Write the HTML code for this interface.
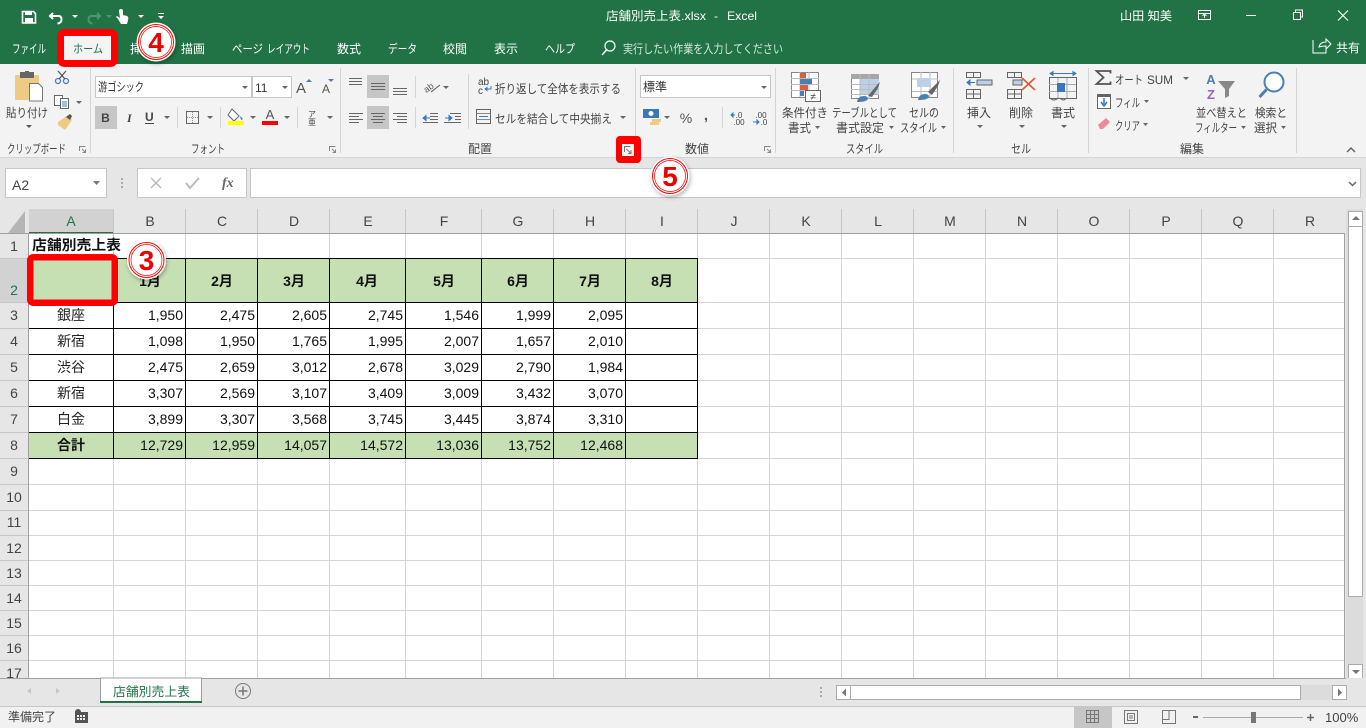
<!DOCTYPE html>
<html lang="ja"><head><meta charset="utf-8"><title>店舗別売上表.xlsx - Excel</title>
<style>
html,body{margin:0;padding:0;background:#e6e6e6;overflow:hidden}
svg{display:block;font-family:"Liberation Sans","Noto Sans CJK JP",sans-serif}
.t{font-size:12px;fill:#444}
.w{font-size:12px;fill:#fff}
.h{font-size:14px;fill:#444;text-anchor:middle}
.n{font-size:14px;fill:#111;text-anchor:end}
.c{font-size:14px;fill:#222;text-anchor:middle}
.b{font-size:14px;fill:#111;font-weight:700;text-anchor:middle}
.num{fill:#e00;font-weight:700;text-anchor:middle;font-size:28px}
</style></head><body>
<svg width="1366" height="728" viewBox="0 0 1366 728" xmlns="http://www.w3.org/2000/svg">
<defs>
<filter id="sh" x="-30%" y="-30%" width="160%" height="160%"><feDropShadow dx="1" dy="2" stdDeviation="2" flood-color="#000" flood-opacity=".3"/></filter>
</defs>
<rect width="1366" height="728" fill="#e6e6e6"/>
<!-- title -->
<rect width="1366" height="64" fill="#217346"/>
<!-- QAT -->
<g fill="none" stroke="#fff">
<path d="M22.500 11.500h11l2 2v9.500h-13z" stroke-width="1.600"/><rect x="25" y="11" width="7" height="4" fill="#fff" stroke="none"/><rect x="25" y="18" width="8" height="5" fill="#fff" stroke="none"/>
<path d="M53 13l-3 3 3 3M50.500 16h8q3 0 3 3.500t-4 4" stroke-width="2"/>
<path d="M97 13l3 3-3 3M99.500 16h-8q-3 0-3 3.500t4 4" stroke="#4f9570" stroke-width="2"/>
</g>
<path d="M119 11q0-2 2-2t2 2v4l4 1q2 1 1 4l-1 4h-6l-3-5-2-2 1-1 3 2z" fill="#fff"/>
<g fill="#fff"><path d="M72 15h6l-3 3zM138 15h6l-3 3zM158 16h6l-3 3z"/><rect x="158" y="13" width="6" height="1"/></g><path d="M106 15h6l-3 3z" fill="#4f9570"/>
<text x="606" y="20" class="w" textLength="100" lengthAdjust="spacingAndGlyphs">店舗別売上表.xlsx</text><text x="714" y="20" class="w">-</text><text x="727" y="20" class="w" textLength="30" lengthAdjust="spacingAndGlyphs">Excel</text>
<text x="1120" y="20" class="w" textLength="52" lengthAdjust="spacingAndGlyphs">山田 知美</text>
<g fill="none" stroke="#fff"><rect x="1198.500" y="10.500" width="12" height="9"/><path d="M1198 13.500h13M1204.500 18v-3M1202.500 16l2-2 2 2"/><path d="M1246 15.500h10"/><rect x="1293.500" y="12.500" width="7" height="7"/><path d="M1295.500 12v-2h7v7h-2"/><path d="M1338 10.500l10 10M1348 10.500l-10 10" stroke-width="1.100"/>
<path d="M1313 40v13h13v-4M1319 47q1-5 7-5v-3l5 5-5 5v-3q-4 0-7 1z" stroke-width="1"/></g>
<text x="1336" y="52" class="w" textLength="24" lengthAdjust="spacingAndGlyphs">共有</text>
<!-- tabs -->
<g class="w">
<text x="12" y="53" class="w" textLength="34" lengthAdjust="spacingAndGlyphs">ファイル</text>
<text x="130" y="53" class="w" textLength="24" lengthAdjust="spacingAndGlyphs">挿入</text>
<text x="181" y="53" class="w" textLength="24" lengthAdjust="spacingAndGlyphs">描画</text>
<text x="232" y="53" class="w" textLength="31" lengthAdjust="spacingAndGlyphs">ページ</text><text x="267" y="53" class="w" textLength="43" lengthAdjust="spacingAndGlyphs">レイアウト</text>
<text x="337" y="53" class="w" textLength="24" lengthAdjust="spacingAndGlyphs">数式</text>
<text x="388" y="53" class="w" textLength="29" lengthAdjust="spacingAndGlyphs">データ</text>
<text x="443" y="53" class="w" textLength="24" lengthAdjust="spacingAndGlyphs">校閲</text>
<text x="494" y="53" class="w" textLength="24" lengthAdjust="spacingAndGlyphs">表示</text>
<text x="545" y="53" class="w" textLength="30" lengthAdjust="spacingAndGlyphs">ヘルプ</text>
<text x="623" y="53" class="w" textLength="160" lengthAdjust="spacingAndGlyphs" style="fill:#d6e6dc">実行したい作業を入力してください</text>
</g>
<circle cx="610" cy="46" r="5" fill="none" stroke="#fff" stroke-width="1.200"/><path d="M606.500 50l-4.500 5" stroke="#fff" stroke-width="1.500"/>
<!-- ribbon -->
<rect y="64" width="1366" height="93" fill="#f3f3f3"/>
<rect y="157" width="1366" height="1" fill="#d4d4d4"/>
<g fill="#d4d4d4"><rect x="90" y="68" width="1" height="85"/><rect x="340" y="68" width="1" height="85"/><rect x="635" y="68" width="1" height="85"/><rect x="775" y="68" width="1" height="85"/><rect x="953" y="68" width="1" height="85"/><rect x="1088" y="68" width="1" height="85"/><rect x="1296" y="68" width="1" height="85"/><rect x="177" y="107" width="1" height="21"/><rect x="220" y="107" width="1" height="21"/><rect x="297" y="107" width="1" height="21"/><rect x="415" y="76" width="1" height="22"/><rect x="415" y="107" width="1" height="21"/><rect x="468" y="74" width="1" height="55"/><rect x="722" y="107" width="1" height="21"/></g>
<!-- clipboard -->
<rect x="15" y="75" width="24" height="25" rx="1" fill="#eecb85"/><rect x="20" y="72" width="14" height="6" fill="#666"/><rect x="25" y="71" width="4" height="3" fill="#666"/>
<path d="M29.500 83.500h9l4 4v13.500h-13z" fill="#fff" stroke="#777"/>
<text x="6" y="117" class="t" textLength="42" lengthAdjust="spacingAndGlyphs">貼り付け</text>
<path d="M26 125h6l-3 3z" fill="#555"/>
<g fill="none" stroke="#4a7fb5" stroke-width="1.300"><circle cx="58" cy="81" r="2.500"/><circle cx="66" cy="81" r="2.500"/></g><path d="M59 79l7-8M65 79l-7-8" stroke="#555" stroke-width="1.300"/>
<g fill="#fff" stroke="#666"><rect x="54.500" y="95.500" width="8" height="10"/><rect x="60.500" y="98.500" width="8" height="10"/></g><path d="M62 102h5M62 104h5M62 106h5" stroke="#4a7fb5"/><path d="M76 101h6l-3 3z" fill="#666"/>
<path d="M58 122l10-7 4 5-7 10-7-5z" fill="#eecb85"/><path d="M66 117l4-3 2 2-2 4z" fill="#555"/>
<text x="7" y="153" class="t" textLength="59" lengthAdjust="spacingAndGlyphs">クリップボード</text>
<!-- launcher helper -->
<g fill="none" stroke="#888"><path d="M79.500 151v-4.500h6M82 149l3 3M85.500 149.500v3h-3"/><path d="M329.500 151v-4.500h6M332 149l3 3M335.500 149.500v3h-3"/><path d="M764.500 151v-4.500h6M767 149l3 3M770.500 149.500v3h-3"/></g>
<!-- font -->
<rect x="95.500" y="76.500" width="156" height="21" fill="#fff" stroke="#c6c6c6"/><rect x="252.500" y="76.500" width="39" height="21" fill="#fff" stroke="#c6c6c6"/>
<text x="98" y="91" class="t" textLength="46" lengthAdjust="spacingAndGlyphs" style="fill:#333">游ゴシック</text><text x="255" y="92" style="font-size:12px" fill="#333">11</text>
<path d="M242 86h6l-3 3zM282 86h6l-3 3z" fill="#666"/>
<text x="296" y="93" font-size="15" fill="#555">A</text><path d="M306 82h6l-3-3z" fill="#4a7fb5"/>
<text x="322" y="93" font-size="12" fill="#555">A</text><path d="M328 79h6l-3 3z" fill="#4a7fb5"/>
<rect x="95" y="106" width="22" height="23" fill="#c6c6c6"/>
<text x="105.500" y="122" font-size="12" font-weight="700" fill="#444" text-anchor="middle">B</text>
<text x="127" y="122" font-size="12" font-style="italic" font-family="Liberation Serif" fill="#444" font-weight="700">I</text>
<text x="145" y="121" font-size="12" font-weight="700" fill="#444">U</text><rect x="145" y="123" width="9" height="1" fill="#444"/>
<path d="M164 116h6l-3 3zM207 116h6l-3 3zM250 116h6l-3 3zM284 116h6l-3 3zM327 116h6l-3 3z" fill="#666"/>
<rect x="186.500" y="111.500" width="12" height="12" fill="none" stroke="#666"/><path d="M192.500 112v11M187 117.500h11" stroke="#888" stroke-dasharray="1 1"/>
<path d="M232 109l7 7-5 5-6-6z" fill="#fff" stroke="#666"/><path d="M240 116l3 3-2 1z" fill="#3a78b8"/><rect x="228" y="121" width="16" height="4" fill="#ff0"/>
<text x="270" y="119" font-size="13" font-weight="400" fill="#555" text-anchor="middle">A</text><rect x="262" y="121" width="16" height="4" fill="#f00"/>
<text x="312" y="117" font-size="8" fill="#444" text-anchor="middle">ア</text><text x="312" y="125" font-size="8" fill="#444" text-anchor="middle">亜</text>
<text x="191" y="153" class="t" textLength="34" lengthAdjust="spacingAndGlyphs">フォント</text>
<!-- align -->
<rect x="367" y="75" width="22" height="23" fill="#c6c6c6"/><rect x="367" y="106" width="22" height="23" fill="#c6c6c6"/>
<g stroke="#666"><path d="M349 78.500h13M349 81.500h13M349 84.500h13"/><path d="M371 83.500h14M371 86.500h14M371 89.500h14"/><path d="M393 88.500h14M393 91.500h14M393 94.500h14"/>
<path d="M349 113.500h14M349 116.500h10M349 119.500h14M349 122.500h10"/><path d="M371 113.500h14M373 116.500h10M371 119.500h14M373 122.500h10"/><path d="M393 113.500h14M397 116.500h10M393 119.500h14M397 122.500h10"/>
<path d="M430 113.500h8M430 116.500h8M430 119.500h8M423 122.500h15" /><path d="M450 113.500h11M455 116.500h6M455 119.500h6M444 122.500h17"/></g>
<path d="M423 118h7M423 118l3-2.500v5z" stroke="#3a78b8" fill="#3a78b8"/><path d="M445 118h7M452 118l-3-2.500v5z" stroke="#3a78b8" fill="#3a78b8"/>
<text x="424" y="90" font-size="9" fill="#555" transform="rotate(-35 430 88)">ab</text><path d="M431 92l9-7" stroke="#555"/><path d="M443 86h6l-3 3z" fill="#666"/>
<text x="478" y="85" font-size="10" fill="#444">ab</text><text x="478" y="94" font-size="10" fill="#444">c</text><path d="M491 86v3h-6M485 89l2-1.500v3z" stroke="#3a78b8" fill="none"/>
<text x="495" y="93" class="t" textLength="126" lengthAdjust="spacingAndGlyphs">折り返して全体を表示する</text>
<rect x="476.500" y="109.500" width="14" height="14" fill="none" stroke="#666"/><path d="M477 113.500h13M477 119.500h13" stroke="#888"/><path d="M479 116.500h9" stroke="#3a78b8"/>
<text x="495" y="123" class="t" textLength="117" lengthAdjust="spacingAndGlyphs">セルを結合して中央揃え</text><path d="M620 116h6l-3 3z" fill="#666"/>
<text x="468" y="153" class="t" textLength="24" lengthAdjust="spacingAndGlyphs">配置</text>
<!-- highlight launcher -->
<rect x="616" y="136" width="25" height="27" rx="4" fill="#f00"/><rect x="622" y="144" width="12" height="12" fill="#f3f3f3"/>
<path d="M624.500 152v-5.500h6M626.500 149l4 4M631 150v3.500h-3" fill="none" stroke="#777"/>
<!-- number -->
<rect x="640.500" y="75.500" width="130" height="22" fill="#fff" stroke="#c6c6c6"/><text x="643" y="91" class="t" textLength="24" lengthAdjust="spacingAndGlyphs" style="fill:#333">標準</text><path d="M761 86h6l-3 3z" fill="#666"/>
<rect x="643" y="109" width="16" height="9" fill="#3a78b8"/><circle cx="651" cy="113.500" r="2.500" fill="#fff"/><path d="M652 119h9v3h-9zM650 122h9v3h-9z" fill="#eecb85"/>
<path d="M664 116h6l-3 3z" fill="#666"/>
<text x="686" y="123" font-size="14" fill="#555" text-anchor="middle">%</text><text x="706" y="120" font-size="15" font-weight="700" fill="#555" text-anchor="middle">,</text>
<text x="739" y="118" font-size="8" fill="#444" text-anchor="middle">.0</text><text x="739" y="125" font-size="8" fill="#444" text-anchor="middle">.00</text><path d="M731 115h4M731 115l2-2v4z" stroke="#3a78b8" fill="#3a78b8"/>
<text x="761" y="118" font-size="8" fill="#444" text-anchor="middle">.00</text><text x="764" y="125" font-size="8" fill="#444" text-anchor="middle">.0</text><path d="M753 122h5M759 122l-2-2v4z" stroke="#3a78b8" fill="#3a78b8"/>
<text x="685" y="153" class="t" textLength="24" lengthAdjust="spacingAndGlyphs">数値</text>
<!-- styles -->
<rect x="791.500" y="72.500" width="27" height="25" fill="#fff" stroke="#888"/><path d="M791 78.500h28M791 84.500h28M791 90.500h28M800 72v25M809 72v25" stroke="#bbb"/><rect x="800" y="73" width="6" height="5" fill="#d9603b"/><rect x="800" y="79" width="12" height="5" fill="#4a7fb5"/><rect x="800" y="85" width="8" height="5" fill="#d9603b"/><rect x="800" y="91" width="4" height="5" fill="#4a7fb5"/>
<rect x="805.500" y="90.500" width="15" height="11" fill="#fff" stroke="#666"/><text x="813" y="100" font-size="10" fill="#444" text-anchor="middle">≠</text>
<text x="782" y="117" class="t" textLength="46" lengthAdjust="spacingAndGlyphs">条件付き</text><text x="788" y="132" class="t" textLength="23" lengthAdjust="spacingAndGlyphs">書式</text><path d="M815 126h5l-2.500 3z" fill="#666"/>
<rect x="851.500" y="74.500" width="27" height="24" fill="#fff" stroke="#888"/><rect x="851" y="74" width="28" height="5" fill="#a7a7a7"/><rect x="860" y="79" width="19" height="15" fill="#bcd0e8"/><path d="M851 84.500h28M851 89.500h28M851 94.500h28M860 74v25M869 74v25" stroke="#bbb"/>
<path d="M868 96l9-11 3-3-2 6-6 9z" fill="#666"/><path d="M857 102q1-6 7-6 3 0 4 2 0 4-11 4z" fill="#4a7fb5"/>
<text x="832" y="117" class="t" textLength="65" lengthAdjust="spacingAndGlyphs">テーブルとして</text><text x="836" y="132" class="t" textLength="48" lengthAdjust="spacingAndGlyphs">書式設定</text><path d="M889 126h5l-2.500 3z" fill="#666"/>
<rect x="911.500" y="72.500" width="26" height="25" fill="#fff" stroke="#888"/><path d="M912 79h26M912 91.500h26M921 72v25M930 72v25" stroke="#bbb"/><rect x="917" y="78" width="14" height="9" fill="#bcd0e8"/>
<path d="M928 92l9-9 3-3-2 6-6 9z" fill="#666"/><path d="M918 100q1-6 7-6 3 0 4 2 0 4-11 4z" fill="#4a7fb5"/>
<text x="909" y="117" class="t" textLength="30" lengthAdjust="spacingAndGlyphs">セルの</text><text x="900" y="132" class="t" textLength="37" lengthAdjust="spacingAndGlyphs">スタイル</text><path d="M941 126h5l-2.500 3z" fill="#666"/>
<text x="846" y="153" class="t" textLength="37" lengthAdjust="spacingAndGlyphs">スタイル</text>
<!-- cells -->
<g fill="none" stroke="#666"><rect x="966.500" y="72.500" width="14" height="5"/><path d="M973.500 72v5"/><rect x="966.500" y="89.500" width="14" height="9"/><path d="M973.500 89v10M966 94h15"/>
<rect x="1007.500" y="72.500" width="14" height="5"/><path d="M1014.500 72v5"/><rect x="1007.500" y="89.500" width="14" height="9"/><path d="M1014.500 89v10M1007 94h15"/>
<rect x="1049.500" y="77.500" width="27" height="21"/><path d="M1058 78v20M1067 78v20M1049 84.500h27M1049 91.500h27" stroke="#aaa"/></g>
<rect x="977" y="80" width="15" height="5" fill="#bcd0e8" stroke="#666"/><path d="M967 82.500h8M967 82.500l3-2.500v5z" stroke="#3a78b8" fill="#3a78b8"/>
<rect x="1013" y="80" width="9" height="5" fill="#bcd0e8" stroke="#666"/><path d="M1022 78l13 12M1035 78l-13 12" stroke="#d9603b" stroke-width="1.800"/>
<rect x="1057" y="83" width="8" height="9" fill="#3a78b8"/><path d="M1050 73.500h26M1050 73.500l3-2v4zM1076 73.500l-3-2v4z" stroke="#3a78b8" fill="#3a78b8"/><path d="M1050 98q4 4 8 0M1060 98q4 4 6 0" stroke="#666" fill="none"/>
<text x="967" y="117" class="t" textLength="24" lengthAdjust="spacingAndGlyphs">挿入</text><text x="1009" y="117" class="t" textLength="24" lengthAdjust="spacingAndGlyphs">削除</text><text x="1051" y="117" class="t" textLength="24" lengthAdjust="spacingAndGlyphs">書式</text>
<path d="M977 125h6l-3 3zM1019 125h6l-3 3zM1061 125h6l-3 3z" fill="#666"/>
<text x="1011" y="153" class="t" textLength="20" lengthAdjust="spacingAndGlyphs">セル</text>
<!-- edit -->
<path d="M1110.500 73.500v-2.500h-14l7 6.500-7 6.500h14v-2.500" fill="none" stroke="#555" stroke-width="1.800"/>
<text x="1115" y="84" class="t" textLength="28" lengthAdjust="spacingAndGlyphs">オート</text><text x="1147" y="84" class="t" textLength="26" lengthAdjust="spacingAndGlyphs">SUM</text><path d="M1183 77h6l-3 3z" fill="#666"/>
<rect x="1097.500" y="94.500" width="13" height="14" fill="#fff" stroke="#666"/><rect x="1097" y="94" width="14" height="3" fill="#666"/><path d="M1104 98v7M1101 102l3 4 3-4" stroke="#3a78b8" fill="none" stroke-width="1.500"/>
<text x="1115" y="107" class="t" textLength="25" lengthAdjust="spacingAndGlyphs">フィル</text><path d="M1144 100h5l-2.500 3z" fill="#666"/>
<path d="M1098 125l8-7 4 4-7 7h-3z" fill="#ec8a9a"/>
<text x="1115" y="130" class="t" textLength="25" lengthAdjust="spacingAndGlyphs">クリア</text><path d="M1143 123h5l-2.500 3z" fill="#666"/>
<text x="1211" y="84" font-size="13" font-weight="700" fill="#4a7fb5" text-anchor="middle">A</text><text x="1211" y="99" font-size="13" font-weight="700" fill="#9a64b8" text-anchor="middle">Z</text>
<path d="M1218 81h17l-6 8v7l-4 2v-9z" fill="#888"/>
<circle cx="1274" cy="82" r="9.500" fill="#fff" stroke="#4a7fb5" stroke-width="2"/><path d="M1266.500 89.500l-7 7.500" stroke="#4a7fb5" stroke-width="3"/>
<text x="1196" y="117" class="t" textLength="51" lengthAdjust="spacingAndGlyphs">並べ替えと</text><text x="1195" y="132" class="t" textLength="42" lengthAdjust="spacingAndGlyphs">フィルター</text><path d="M1241 126h5l-2.500 3z" fill="#666"/>
<text x="1255" y="117" class="t" textLength="32" lengthAdjust="spacingAndGlyphs">検索と</text><text x="1254" y="132" class="t" textLength="23" lengthAdjust="spacingAndGlyphs">選択</text><path d="M1281 126h5l-2.500 3z" fill="#666"/>
<text x="1180" y="153" class="t" textLength="24" lengthAdjust="spacingAndGlyphs">編集</text>
<path d="M1347 152l4-4 4 4" fill="none" stroke="#666" stroke-width="1.500"/>
<!-- formula bar -->
<rect x="5.500" y="168.500" width="101" height="29" fill="#fff" stroke="#c6c6c6"/><text x="12" y="190" font-size="14" fill="#444">A2</text><path d="M93 181h7l-3.500 4z" fill="#777"/>
<g fill="#aaa"><rect x="121" y="178" width="2" height="2"/><rect x="121" y="182" width="2" height="2"/><rect x="121" y="186" width="2" height="2"/></g>
<rect x="137.500" y="168.500" width="109" height="29" fill="#fff" stroke="#c6c6c6"/>
<path d="M151 178l10 10M161 178l-10 10" stroke="#bbb" stroke-width="1.500"/><path d="M186 183l4 5 9-10" stroke="#bbb" stroke-width="2" fill="none"/>
<text x="222" y="187" font-family="Liberation Serif" font-style="italic" font-weight="700" font-size="14" fill="#666">fx</text>
<rect x="250.500" y="168.500" width="1110" height="29" fill="#fff" stroke="#c6c6c6"/><path d="M1349 182l3.500 3.500 3.500-3.500" stroke="#666" stroke-width="1.500" fill="none"/>
<!-- sheet -->
<rect x="29" y="234" width="1316" height="444" fill="#fff"/>
<rect y="209" width="1345" height="25" fill="#e6e6e6"/><rect y="234" width="29" height="444" fill="#e6e6e6"/>
<rect x="29" y="209" width="85" height="24" fill="#d2d2d2"/><rect x="29" y="232" width="85" height="2" fill="#217346"/>
<rect y="258" width="28" height="45" fill="#d2d2d2"/>
<path d="M25 212v22h-17z" fill="#b5b5b5" transform="translate(0,-1)"/>
<!-- header separators -->
<g stroke="#c6c6c6" fill="none">
<path d="M113.500 209v25M185.500 209v25M257.500 209v25M329.500 209v25M405.500 209v25M481.500 209v25M553.500 209v25M625.500 209v25M697.500 209v25M769.500 209v25M841.500 209v25M913.500 209v25M985.500 209v25M1057.500 209v25M1129.500 209v25M1201.500 209v25M1273.500 209v25"/>
<path d="M0 258.500h28M0 302.500h28M0 328.500h28M0 354.500h28M0 380.500h28M0 406.500h28M0 432.500h28M0 458.500h28M0 484.500h28M0 510.500h28M0 535.500h28M0 560.500h28M0 585.500h28M0 610.500h28M0 635.500h28M0 660.500h28"/>
</g>
<g stroke="#a0a0a0"><path d="M0 233.500h1345M28.500 234v444M1344.500 233v445"/></g>
<!-- gridlines -->
<g stroke="#d4d4d4" fill="none">
<path d="M113.500 234v444M185.500 234v444M257.500 234v444M329.500 234v444M405.500 234v444M481.500 234v444M553.500 234v444M625.500 234v444M697.500 234v444M769.500 234v444M841.500 234v444M913.500 234v444M985.500 234v444M1057.500 234v444M1129.500 234v444M1201.500 234v444M1273.500 234v444"/>
<path d="M29 258.500h1315M29 302.500h1315M29 328.500h1315M29 354.500h1315M29 380.500h1315M29 406.500h1315M29 432.500h1315M29 458.500h1315M29 484.500h1315M29 510.500h1315M29 535.500h1315M29 560.500h1315M29 585.500h1315M29 610.500h1315M29 635.500h1315M29 660.500h1315"/>
</g>
<rect x="29" y="259" width="669" height="44" fill="#c6e0b4"/><rect x="29" y="433" width="669" height="26" fill="#c6e0b4"/>
<rect x="29" y="303" width="669" height="130" fill="#fff"/>
<g stroke="#000" fill="none">
<path d="M29 258.500h669M29 302.500h669M29 328.500h669M29 354.500h669M29 380.500h669M29 406.500h669M29 432.500h669M29 458.500h669"/>
<path d="M113.500 258v201M185.500 258v201M257.500 258v201M329.500 258v201M405.500 258v201M481.500 258v201M553.500 258v201M625.500 258v201M697.500 258v201"/>
</g>
<!-- col headers -->
<g><text x="71" y="226" class="h" style="fill:#217346">A</text><text x="150" y="226" class="h">B</text><text x="222" y="226" class="h">C</text><text x="294" y="226" class="h">D</text><text x="368" y="226" class="h">E</text><text x="444" y="226" class="h">F</text><text x="518" y="226" class="h">G</text><text x="590" y="226" class="h">H</text><text x="662" y="226" class="h">I</text><text x="734" y="226" class="h">J</text><text x="806" y="226" class="h">K</text><text x="878" y="226" class="h">L</text><text x="950" y="226" class="h">M</text><text x="1022" y="226" class="h">N</text><text x="1094" y="226" class="h">O</text><text x="1166" y="226" class="h">P</text><text x="1238" y="226" class="h">Q</text><text x="1310" y="226" class="h">R</text></g>
<!-- row headers -->
<g><text x="14" y="251" class="h">1</text><text x="14" y="295" class="h" style="fill:#217346">2</text><text x="14" y="320" class="h">3</text><text x="14" y="346" class="h">4</text><text x="14" y="372" class="h">5</text><text x="14" y="398" class="h">6</text><text x="14" y="424" class="h">7</text><text x="14" y="450" class="h">8</text><text x="14" y="476" class="h">9</text><text x="14" y="502" class="h">10</text><text x="14" y="527" class="h">11</text><text x="14" y="553" class="h">12</text><text x="14" y="578" class="h">13</text><text x="14" y="603" class="h">14</text><text x="14" y="628" class="h">15</text><text x="14" y="653" class="h">16</text><text x="14" y="678" class="h">17</text></g>
<text x="32" y="250" font-size="14" font-weight="700" fill="#111" textLength="89" lengthAdjust="spacingAndGlyphs">店舗別売上表</text>
<!-- table header -->
<g><text x="150" y="286" class="b">1月</text><text x="222" y="286" class="b">2月</text><text x="294" y="286" class="b">3月</text><text x="367" y="286" class="b">4月</text><text x="444" y="286" class="b">5月</text><text x="518" y="286" class="b">6月</text><text x="590" y="286" class="b">7月</text><text x="662" y="286" class="b">8月</text></g>
<g><text x="71" y="320" class="c">銀座</text><text x="71" y="346" class="c">新宿</text><text x="71" y="372" class="c">渋谷</text><text x="71" y="398" class="c">新宿</text><text x="71" y="424" class="c">白金</text><text x="71" y="450" class="b">合計</text></g>
<g>
<text x="183" y="320" class="n">1,950</text><text x="255" y="320" class="n">2,475</text><text x="327" y="320" class="n">2,605</text><text x="403" y="320" class="n">2,745</text><text x="479" y="320" class="n">1,546</text><text x="551" y="320" class="n">1,999</text><text x="623" y="320" class="n">2,095</text>
<text x="183" y="346" class="n">1,098</text><text x="255" y="346" class="n">1,950</text><text x="327" y="346" class="n">1,765</text><text x="403" y="346" class="n">1,995</text><text x="479" y="346" class="n">2,007</text><text x="551" y="346" class="n">1,657</text><text x="623" y="346" class="n">2,010</text>
<text x="183" y="372" class="n">2,475</text><text x="255" y="372" class="n">2,659</text><text x="327" y="372" class="n">3,012</text><text x="403" y="372" class="n">2,678</text><text x="479" y="372" class="n">3,029</text><text x="551" y="372" class="n">2,790</text><text x="623" y="372" class="n">1,984</text>
<text x="183" y="398" class="n">3,307</text><text x="255" y="398" class="n">2,569</text><text x="327" y="398" class="n">3,107</text><text x="403" y="398" class="n">3,409</text><text x="479" y="398" class="n">3,009</text><text x="551" y="398" class="n">3,432</text><text x="623" y="398" class="n">3,070</text>
<text x="183" y="424" class="n">3,899</text><text x="255" y="424" class="n">3,307</text><text x="327" y="424" class="n">3,568</text><text x="403" y="424" class="n">3,745</text><text x="479" y="424" class="n">3,445</text><text x="551" y="424" class="n">3,874</text><text x="623" y="424" class="n">3,310</text>
<text x="183" y="450" class="n">12,729</text><text x="255" y="450" class="n">12,959</text><text x="327" y="450" class="n">14,057</text><text x="403" y="450" class="n">14,572</text><text x="479" y="450" class="n">13,036</text><text x="551" y="450" class="n">13,752</text><text x="623" y="450" class="n">12,468</text>
</g>
<!-- vscroll -->
<rect x="1346" y="209" width="17" height="469" fill="#dcdcdc"/><rect x="1363" y="209" width="3" height="469" fill="#e6e6e6"/>
<rect x="1348.500" y="211.500" width="14" height="15" fill="#fff" stroke="#ababab"/><path d="M1352 220h8l-4-4z" fill="#777"/>
<rect x="1348.500" y="226.500" width="14" height="370" fill="#fff" stroke="#ababab"/>
<rect x="1348.500" y="664.500" width="14" height="14" fill="#fff" stroke="#ababab"/><path d="M1352 670h8l-4 4z" fill="#777"/>
<!-- tab bar -->
<rect y="678" width="1366" height="28" fill="#e6e6e6"/>
<rect y="678" width="1346" height="1" fill="#a0a0a0"/>
<rect y="706" width="1366" height="1" fill="#c6c6c6"/>
<path d="M31 688v6l-4-3zM56 688v6l4-3z" fill="#c6c6c6"/>
<path d="M100.500 701v-23h101v23" fill="#fff" stroke="#a0a0a0"/><rect x="100" y="701" width="102" height="2" fill="#217346"/>
<text x="113" y="696" font-size="12.500" fill="#217346" textLength="77" lengthAdjust="spacingAndGlyphs">店舗別売上表</text>
<circle cx="243" cy="691" r="7.500" fill="none" stroke="#777"/><path d="M238.500 691h9M243 686.500v9" stroke="#777" stroke-width="1.500"/>
<g fill="#aaa"><rect x="820" y="687" width="2" height="2"/><rect x="820" y="691" width="2" height="2"/><rect x="820" y="695" width="2" height="2"/></g>
<rect x="836" y="685" width="508" height="15" fill="#dcdcdc"/>
<rect x="836.500" y="685.500" width="14" height="14" fill="#fff" stroke="#ababab"/><path d="M846 688.500v8l-4-4z" fill="#777"/>
<rect x="850.500" y="685.500" width="450" height="14" fill="#fff" stroke="#ababab"/>
<rect x="1332.500" y="685.500" width="14" height="14" fill="#fff" stroke="#ababab"/><path d="M1338 688.500v8l4-4z" fill="#777"/>
<!-- status -->
<rect y="707" width="1366" height="21" fill="#f1f1f1"/>
<text x="8" y="721" class="t" textLength="48" lengthAdjust="spacingAndGlyphs">準備完了</text>
<rect x="75" y="712" width="13" height="11" fill="#555"/><circle cx="78" cy="712" r="3" fill="#555"/><g fill="#f1f1f1"><rect x="77" y="715" width="2" height="2"/><rect x="80" y="715" width="2" height="2"/><rect x="83" y="715" width="2" height="2"/><rect x="77" y="718" width="2" height="2"/><rect x="80" y="718" width="2" height="2"/><rect x="83" y="718" width="2" height="2"/></g>
<rect x="1074" y="707" width="38" height="21" fill="#c6c6c6"/>
<g fill="none" stroke="#777"><rect x="1086.500" y="710.500" width="12" height="12"/><path d="M1090.500 711v12M1094.500 711v12M1087 714.500h12M1087 718.500h12"/><rect x="1124.500" y="710.500" width="13" height="13"/><rect x="1127.500" y="713.500" width="7" height="7"/><path d="M1129 716h4M1129 718h4"/><path d="M1162.500 710.500h13v13h-13z"/><path d="M1162 719.500h7v-9"/></g>
<rect x="1193" y="716" width="5" height="2" fill="#666"/><rect x="1203" y="717" width="100" height="1" fill="#aaa"/><rect x="1251" y="712" width="5" height="11" fill="#777"/><path d="M1307 717.500h7M1310.500 714v7" stroke="#666" stroke-width="1.500"/>
<text x="1325" y="722" font-size="13" fill="#444">100%</text>
<!-- annotations -->
<g fill="none" stroke="#f00"><rect x="60.500" y="32.500" width="54" height="31" rx="4" stroke-width="7"/></g>
<rect x="64" y="36" width="47" height="24" fill="#f3f3f3"/>
<text x="73" y="53" font-size="12" fill="#217346" textLength="30" lengthAdjust="spacingAndGlyphs">ホーム</text>
<rect x="30.250" y="257.250" width="84.500" height="45.500" rx="3" fill="#c6e0b4" stroke="#f00" stroke-width="6.500"/>
<g filter="url(#sh)"><circle cx="156" cy="42" r="19.500" fill="#fff"/></g><circle cx="156" cy="42" r="17.500" fill="none" stroke="#f00"/><circle cx="156" cy="42" r="15.500" fill="none" stroke="#f00" stroke-width=".7"/><text x="156" y="52" class="num">4</text>
<g filter="url(#sh)"><circle cx="146.500" cy="260" r="19.500" fill="#fff"/></g><circle cx="146.500" cy="260" r="17.500" fill="none" stroke="#f00"/><circle cx="146.500" cy="260" r="15.500" fill="none" stroke="#f00" stroke-width=".7"/><text x="146.500" y="270" class="num">3</text>
<g filter="url(#sh)"><circle cx="670" cy="176" r="19.500" fill="#fff"/></g><circle cx="670" cy="176" r="17.500" fill="none" stroke="#f00"/><circle cx="670" cy="176" r="15.500" fill="none" stroke="#f00" stroke-width=".7"/><text x="670" y="186" class="num">5</text>
</svg>
</body></html>
